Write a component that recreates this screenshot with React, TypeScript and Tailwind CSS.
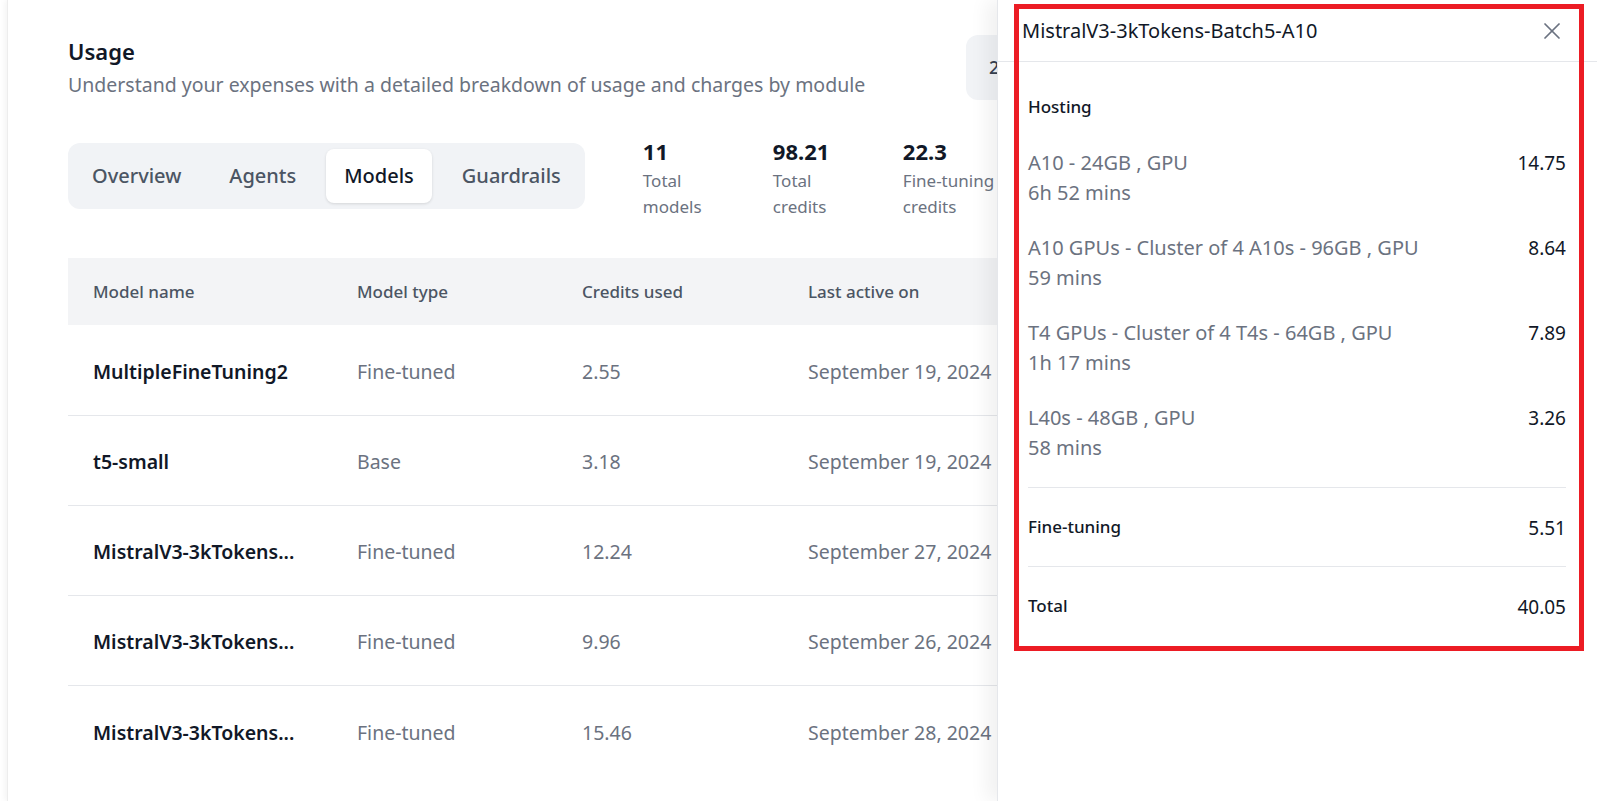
import { X } from "lucide-react";

const tabs = ["Overview", "Agents", "Models", "Guardrails"];

const stats = [
  { value: "11", lines: ["Total", "models"] },
  { value: "98.21", lines: ["Total", "credits"] },
  { value: "22.3", lines: ["Fine-tuning", "credits"] },
];

const models = [
  { name: "MultipleFineTuning2", type: "Fine-tuned", credits: "2.55", date: "September 19, 2024" },
  { name: "t5-small", type: "Base", credits: "3.18", date: "September 19, 2024" },
  { name: "MistralV3-3kTokens...", type: "Fine-tuned", credits: "12.24", date: "September 27, 2024" },
  { name: "MistralV3-3kTokens...", type: "Fine-tuned", credits: "9.96", date: "September 26, 2024" },
  { name: "MistralV3-3kTokens...", type: "Fine-tuned", credits: "15.46", date: "September 28, 2024" },
];

const hosting = [
  { label: "A10 - 24GB , GPU", time: "6h 52 mins", value: "14.75" },
  { label: "A10 GPUs - Cluster of 4 A10s - 96GB , GPU", time: "59 mins", value: "8.64" },
  { label: "T4 GPUs - Cluster of 4 T4s - 64GB , GPU", time: "1h 17 mins", value: "7.89" },
  { label: "L40s - 48GB , GPU", time: "58 mins", value: "3.26" },
];

export default function App() {
  return (
    <div
      className="relative h-[801px] w-[1597px] overflow-hidden bg-white"
      style={{ fontFamily: '"Noto Sans", "Open Sans", sans-serif' }}
    >
      {/* usage page */}
      <div className="ml-[7px] h-full border-l border-[#ededed] pl-[60px] pt-[35px] shadow-[-2px_0_6px_rgba(0,0,0,0.05)]">
        <div className="flex items-center">
          <div className="w-[898px]">
            <h1 className="text-[22px] font-semibold leading-[28px] text-[#111827]">Usage</h1>
            <p className="mt-[6px] text-[19.5px] leading-[28px] text-[#6b7280]">
              Understand your expenses with a detailed breakdown of usage and charges by module
            </p>
          </div>
          <div className="flex h-[65px] w-[420px] items-center rounded-xl bg-[#f1f3f6] pl-[23px] text-[18px] font-medium text-[#374151]">
            2024-09-01 - 2024-09-30
          </div>
        </div>

        <div className="mt-[36px] flex items-start">
          <div className="mt-[7px] flex gap-3 rounded-xl bg-[#f1f3f6] p-[6px]">
            {tabs.map((t) => (
              <div
                key={t}
                className={
                  t === "Models"
                    ? "flex h-[54px] items-center rounded-lg bg-white px-[18px] text-[20px] font-medium text-[#111827] shadow-[0_1px_3px_rgba(0,0,0,0.12)]"
                    : "flex h-[54px] items-center px-[18px] text-[20px] font-medium text-[#4b5563]"
                }
              >
                {t}
              </div>
            ))}
          </div>
          <div className="ml-[58px] mt-[2px] flex gap-[42px]">
            {stats.map((s) => (
              <div key={s.value} className="w-[88px]">
                <div className="text-[22px] font-bold leading-[26px] text-[#111827]">{s.value}</div>
                <div className="mt-[4px] text-[17px] leading-[26px] text-[#6b7280]">
                  {s.lines.map((l) => (
                    <div key={l} className="whitespace-nowrap">{l}</div>
                  ))}
                </div>
              </div>
            ))}
          </div>
        </div>

        <table className="mt-[38px] w-[1463px] table-fixed border-collapse">
          <colgroup>
            <col className="w-[264px]" />
            <col className="w-[225px]" />
            <col className="w-[226px]" />
            <col />
          </colgroup>
          <thead>
            <tr className="h-[67px] bg-[#f3f4f6] text-left text-[17px] font-medium text-[#4b5563]">
              <th className="pl-[25px] font-medium">Model name</th>
              <th className="pl-[25px] font-medium">Model type</th>
              <th className="pl-[25px] font-medium">Credits used</th>
              <th className="pl-[25px] font-medium">Last active on</th>
            </tr>
          </thead>
          <tbody>
            {models.map((m, i) => (
              <tr
                key={i}
                className={i < models.length - 1 ? "h-[90px] border-b border-[#e5e7eb]" : "h-[90px]"}
              >
                <td className="pl-[25px] pt-[4px] text-[19.5px] font-semibold text-[#111827]">{m.name}</td>
                <td className="pl-[25px] pt-[4px] text-[19.5px] text-[#6b7280]">{m.type}</td>
                <td className="pl-[25px] pt-[4px] text-[19.5px] text-[#6b7280]">{m.credits}</td>
                <td className="pl-[25px] pt-[4px] text-[19.5px] text-[#6b7280]">{m.date}</td>
              </tr>
            ))}
          </tbody>
        </table>
      </div>

      {/* drawer */}
      <div className="absolute bottom-0 right-0 top-0 w-[600px] border-l border-[#e5e7eb] bg-white shadow-[-10px_0_18px_rgba(0,0,0,0.06)]">
        <div className="flex h-[62px] items-center justify-between border-b border-[#e5e7eb] pl-[24px] pr-[31px]">
          <span className="text-[20px] text-[#111827]">MistralV3-3kTokens-Batch5-A10</span>
          <X size={28} strokeWidth={1.5} className="text-[#6b7280]" />
        </div>
        <div className="pl-[30px] pr-[31px]">
          <div className="pt-[33px] text-[17px] font-medium leading-6 text-[#111827]">Hosting</div>
          <div className="mt-[29px] flex flex-col gap-[25px]">
            {hosting.map((h) => (
              <div key={h.label} className="flex justify-between text-[20px] leading-[30px]">
                <div className="text-[#6b7280]">
                  <div>{h.label}</div>
                  <div>{h.time}</div>
                </div>
                <div className="text-[19px] text-[#111827]">{h.value}</div>
              </div>
            ))}
          </div>
          <div className="mt-[24px] flex h-[79px] items-center justify-between border-t border-[#e5e7eb]">
            <span className="text-[17px] font-medium text-[#111827]">Fine-tuning</span>
            <span className="pt-[3px] text-[19px] text-[#111827]">5.51</span>
          </div>
          <div className="flex h-[79px] items-center justify-between border-t border-[#e5e7eb]">
            <span className="text-[17px] font-medium text-[#111827]">Total</span>
            <span className="pt-[3px] text-[19px] text-[#111827]">40.05</span>
          </div>
        </div>
      </div>

      {/* highlight annotation */}
      <div className="absolute left-[1014px] top-[4px] h-[647px] w-[570px] border-[5px] border-[#ec1c24]" />
    </div>
  );
}
